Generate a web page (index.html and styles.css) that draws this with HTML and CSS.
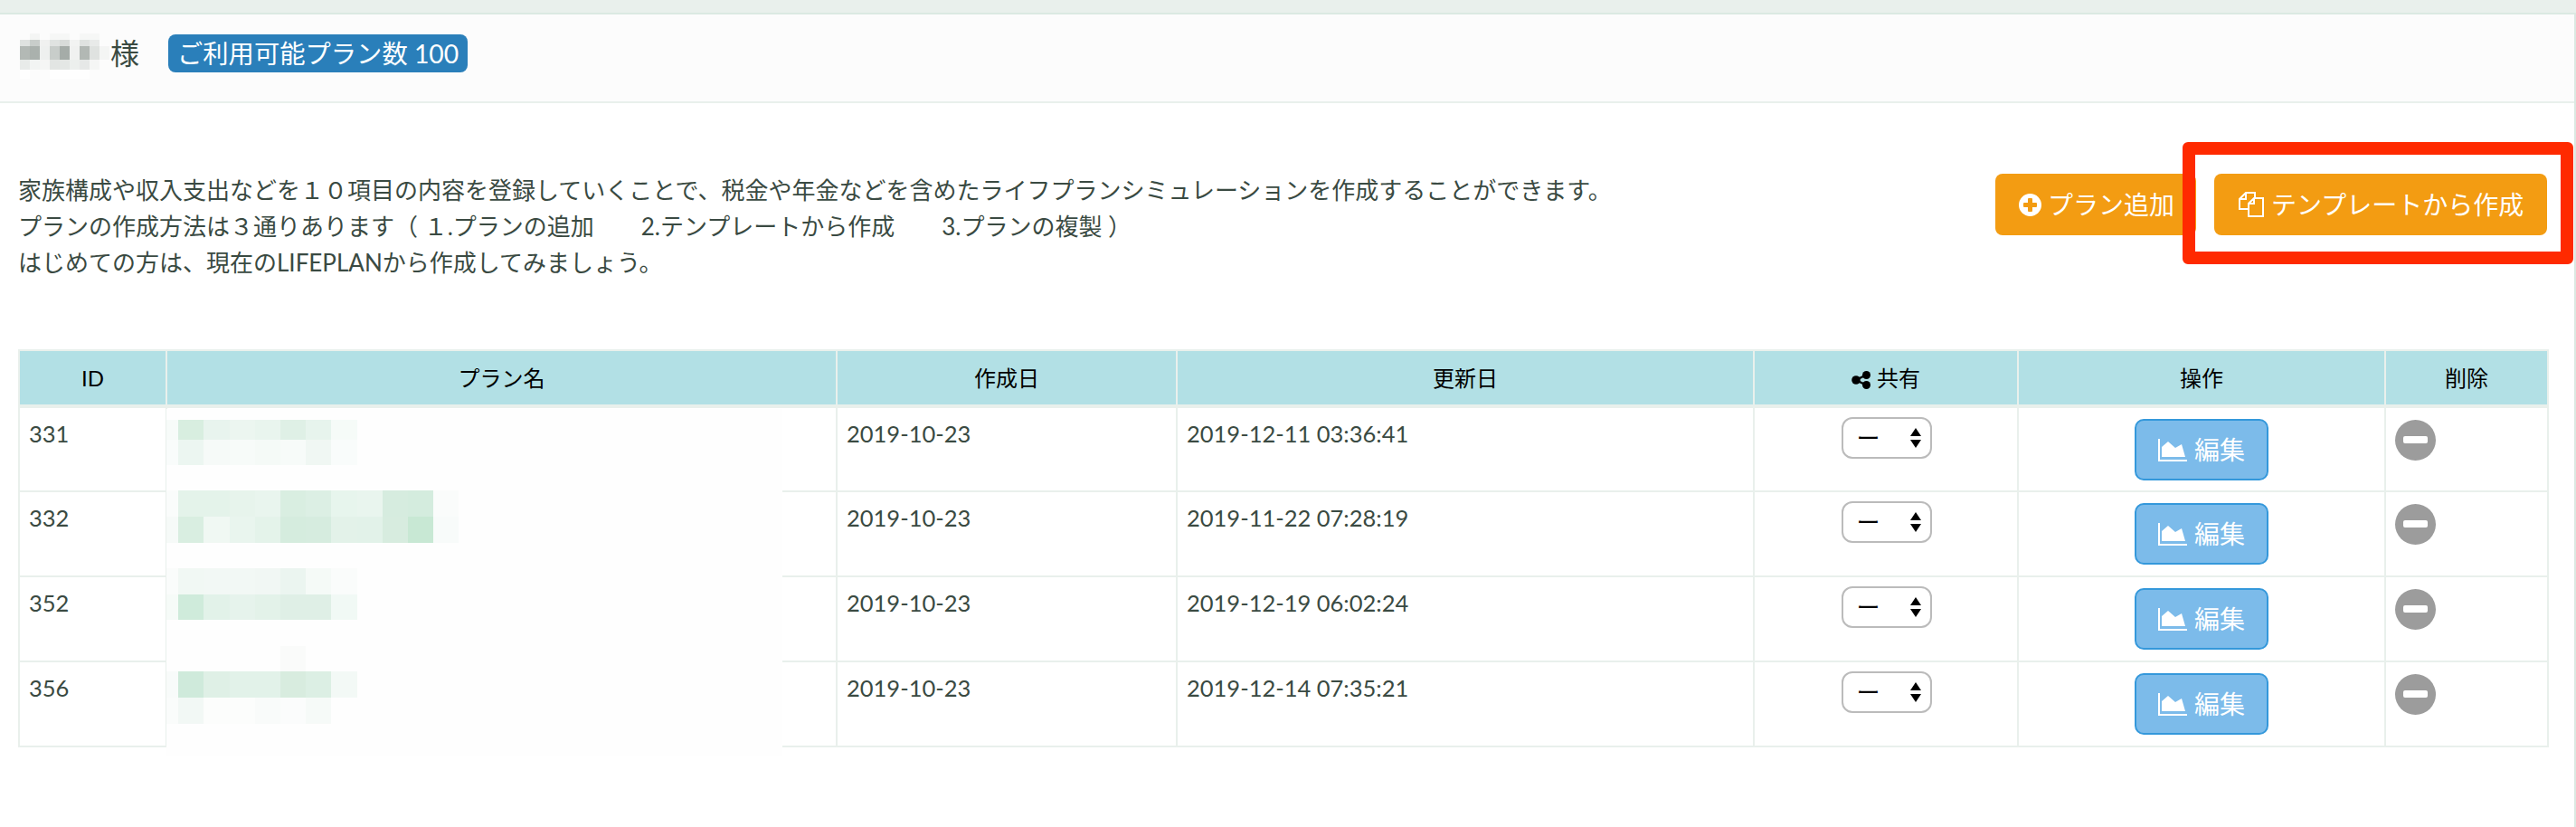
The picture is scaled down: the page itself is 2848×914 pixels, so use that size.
FILE: index.html
```html
<!DOCTYPE html>
<html lang="ja">
<head>
<meta charset="utf-8">
<title>プラン一覧</title>
<link rel="stylesheet" href="styles.css">
</head>
<body>
<div class="topband"></div>
<main class="panel">
  <header class="panel-head">
    <svg class="name-blur" width="100" height="51" viewBox="0 0 100 51">
      <rect x="11" y="0" width="11" height="7" fill="#f4f5f4"/><rect x="33" y="0" width="22" height="7" fill="#f6f7f6"/><rect x="66" y="0" width="22" height="7" fill="#f6f7f6"/>
      <rect x="0" y="7" width="11" height="7" fill="#dfe2e0"/><rect x="11" y="7" width="11" height="7" fill="#c8cdca"/><rect x="22" y="7" width="11" height="7" fill="#f0f1f0"/><rect x="33" y="7" width="11" height="7" fill="#e0e3e1"/><rect x="44" y="7" width="11" height="7" fill="#d8dbd9"/><rect x="55" y="7" width="11" height="7" fill="#f2f3f2"/><rect x="66" y="7" width="11" height="7" fill="#dfe2e0"/><rect x="77" y="7" width="11" height="7" fill="#e8eae9"/>
      <rect x="0" y="14" width="11" height="15" fill="#b3b9b5"/><rect x="11" y="14" width="11" height="15" fill="#aab1ad"/><rect x="22" y="14" width="11" height="15" fill="#eef0ef"/><rect x="33" y="14" width="11" height="15" fill="#c8cdca"/><rect x="44" y="14" width="11" height="15" fill="#a5aca8"/><rect x="55" y="14" width="11" height="15" fill="#f0f1f0"/><rect x="66" y="14" width="11" height="15" fill="#b2b8b4"/><rect x="77" y="14" width="11" height="15" fill="#dfe2e0"/><rect x="88" y="14" width="11" height="15" fill="#f4f5f4"/>
      <rect x="0" y="29" width="11" height="11" fill="#e8ebe9"/><rect x="11" y="29" width="11" height="11" fill="#f2f4f3"/><rect x="22" y="29" width="11" height="11" fill="#f5f6f5"/><rect x="33" y="29" width="11" height="11" fill="#e2e5e3"/><rect x="44" y="29" width="11" height="11" fill="#e4e7e5"/><rect x="55" y="29" width="11" height="11" fill="#ecefed"/><rect x="66" y="29" width="11" height="11" fill="#e6e8e7"/><rect x="77" y="29" width="11" height="11" fill="#f5f6f5"/>
      <rect x="0" y="40" width="11" height="10" fill="#fefefe"/><rect x="33" y="40" width="44" height="10" fill="#fefefe"/>
    </svg>
    <span class="honorific">様</span>
    <span class="badge">ご利用可能プラン数 100</span>
  </header>

  <section class="intro">
    <p class="intro-text">家族構成や収入支出などを１０項目の内容を登録していくことで、税金や年金などを含めたライフプランシミュレーションを作成することができます。<br>プランの作成方法は３通りあります（ １.プランの追加　　2.テンプレートから作成　　3.プランの複製 ）<br>はじめての方は、現在のLIFEPLANから作成してみましょう。</p>
    <div class="actions">
      <a class="btn btn-add">
        <svg class="ico-plus" width="25" height="25" viewBox="0 0 25 25"><circle cx="12.500" cy="12.500" r="12.500" fill="#fff"/><rect x="10" y="5" width="5" height="15" rx="1" fill="#f39c12"/><rect x="5" y="10" width="15" height="5" rx="1" fill="#f39c12"/></svg>
        プラン追加
      </a>
      <a class="btn btn-template">
        <svg class="ico-copy" width="28" height="28" viewBox="0 0 28 28"><path d="M10 19H1V8L8 1H18V7M8 1V8H1M17 7H27V27H11V13ZM17 7V13H11" fill="none" stroke="#fff" stroke-width="2"/></svg>
        テンプレートから作成
      </a>
      <div class="highlight"></div>
    </div>
  </section>

  <div class="table-wrap">
    <table class="plans">
      <colgroup>
        <col class="c-id"><col class="c-name"><col class="c-created"><col class="c-updated"><col class="c-share"><col class="c-op"><col class="c-del">
      </colgroup>
      <thead>
        <tr>
          <th>ID</th><th>プラン名</th><th>作成日</th><th>更新日</th>
          <th><svg class="ico-share" width="22" height="20" viewBox="0 0 22 20"><path d="M16 4.500 5 10 16 15.500" fill="none" stroke="#000" stroke-width="2.500"/><circle cx="5" cy="10" r="4.800"/><circle cx="16.500" cy="4.500" r="4.500"/><circle cx="16.500" cy="15.500" r="4.500"/></svg>共有</th>
          <th>操作</th><th>削除</th>
        </tr>
      </thead>
      <tbody>
        <tr>
          <td>331</td><td></td><td>2019-10-23</td><td>2019-12-11 03:36:41</td>
          <td class="center"><div class="select"><span>ー</span><svg width="12" height="22" viewBox="0 0 12 22"><path d="M6 0 12 9H0ZM0 13H12L6 22Z"/></svg></div></td>
          <td class="center"><a class="btn-edit"><svg width="32" height="25" viewBox="0 0 32 25"><path d="M1 0V24H32" fill="none" stroke="#fff" stroke-width="2"/><path d="M4 20V9L11 3 19 10 26 6 30 20Z" fill="#fff"/></svg>編集</a></td>
          <td><svg class="ico-del" width="45" height="45" viewBox="0 0 45 45"><circle cx="22.500" cy="22.500" r="22.500" fill="#9c9c9c"/><rect x="9" y="18" width="27" height="8" rx="2" fill="#fff"/></svg></td>
        </tr>
        <tr>
          <td>332</td><td></td><td>2019-10-23</td><td>2019-11-22 07:28:19</td>
          <td class="center"><div class="select"><span>ー</span><svg width="12" height="22" viewBox="0 0 12 22"><path d="M6 0 12 9H0ZM0 13H12L6 22Z"/></svg></div></td>
          <td class="center"><a class="btn-edit"><svg width="32" height="25" viewBox="0 0 32 25"><path d="M1 0V24H32" fill="none" stroke="#fff" stroke-width="2"/><path d="M4 20V9L11 3 19 10 26 6 30 20Z" fill="#fff"/></svg>編集</a></td>
          <td><svg class="ico-del" width="45" height="45" viewBox="0 0 45 45"><circle cx="22.500" cy="22.500" r="22.500" fill="#9c9c9c"/><rect x="9" y="18" width="27" height="8" rx="2" fill="#fff"/></svg></td>
        </tr>
        <tr>
          <td>352</td><td></td><td>2019-10-23</td><td>2019-12-19 06:02:24</td>
          <td class="center"><div class="select"><span>ー</span><svg width="12" height="22" viewBox="0 0 12 22"><path d="M6 0 12 9H0ZM0 13H12L6 22Z"/></svg></div></td>
          <td class="center"><a class="btn-edit"><svg width="32" height="25" viewBox="0 0 32 25"><path d="M1 0V24H32" fill="none" stroke="#fff" stroke-width="2"/><path d="M4 20V9L11 3 19 10 26 6 30 20Z" fill="#fff"/></svg>編集</a></td>
          <td><svg class="ico-del" width="45" height="45" viewBox="0 0 45 45"><circle cx="22.500" cy="22.500" r="22.500" fill="#9c9c9c"/><rect x="9" y="18" width="27" height="8" rx="2" fill="#fff"/></svg></td>
        </tr>
        <tr>
          <td>356</td><td></td><td>2019-10-23</td><td>2019-12-14 07:35:21</td>
          <td class="center"><div class="select"><span>ー</span><svg width="12" height="22" viewBox="0 0 12 22"><path d="M6 0 12 9H0ZM0 13H12L6 22Z"/></svg></div></td>
          <td class="center"><a class="btn-edit"><svg width="32" height="25" viewBox="0 0 32 25"><path d="M1 0V24H32" fill="none" stroke="#fff" stroke-width="2"/><path d="M4 20V9L11 3 19 10 26 6 30 20Z" fill="#fff"/></svg>編集</a></td>
          <td><svg class="ico-del" width="45" height="45" viewBox="0 0 45 45"><circle cx="22.500" cy="22.500" r="22.500" fill="#9c9c9c"/><rect x="9" y="18" width="27" height="8" rx="2" fill="#fff"/></svg></td>
        </tr>
      </tbody>
    </table>
    <svg class="mosaic" width="681" height="384" viewBox="0 2 681 384">
      <rect y="0" width="681" height="388" fill="#fefefe"/>
      <g>
        <rect x="0" y="14" width="13" height="22" fill="#f7fbf9"/><rect x="13" y="14" width="28" height="22" fill="#d8eee0"/><rect x="41" y="14" width="29" height="22" fill="#e8f4ee"/><rect x="70" y="14" width="28" height="22" fill="#ecf6f0"/><rect x="98" y="14" width="28" height="22" fill="#e9f5ee"/><rect x="126" y="14" width="28" height="22" fill="#dff0e6"/><rect x="154" y="14" width="28" height="22" fill="#e7f4ed"/><rect x="182" y="14" width="29" height="22" fill="#f6fbf8"/>
        <rect x="0" y="36" width="13" height="28" fill="#f9fcfb"/><rect x="13" y="36" width="28" height="28" fill="#ecf6f1"/><rect x="41" y="36" width="29" height="28" fill="#f6faf8"/><rect x="70" y="36" width="28" height="28" fill="#f7fbf9"/><rect x="98" y="36" width="28" height="28" fill="#f5faf7"/><rect x="126" y="36" width="28" height="28" fill="#f7fbf9"/><rect x="154" y="36" width="28" height="28" fill="#f0f7f3"/><rect x="182" y="36" width="29" height="28" fill="#f9fcfb"/>
      </g>
      <g>
        <rect x="0" y="92" width="13" height="29" fill="#fafcfb"/><rect x="13" y="92" width="28" height="29" fill="#e4f3ea"/><rect x="41" y="92" width="29" height="29" fill="#e4f3ea"/><rect x="70" y="92" width="28" height="29" fill="#e7f4ec"/><rect x="98" y="92" width="28" height="29" fill="#e9f5ee"/><rect x="126" y="92" width="28" height="29" fill="#d9eee1"/><rect x="154" y="92" width="28" height="29" fill="#dcefe4"/><rect x="182" y="92" width="29" height="29" fill="#e7f5ed"/><rect x="211" y="92" width="28" height="29" fill="#e9f5ee"/><rect x="239" y="92" width="28" height="29" fill="#d6ecdf"/><rect x="267" y="92" width="28" height="29" fill="#d4ecde"/><rect x="295" y="92" width="28" height="29" fill="#fafcfb"/>
        <rect x="0" y="121" width="13" height="29" fill="#f6faf8"/><rect x="13" y="121" width="28" height="29" fill="#d9eee1"/><rect x="41" y="121" width="29" height="29" fill="#f0f8f3"/><rect x="70" y="121" width="28" height="29" fill="#e9f5ee"/><rect x="98" y="121" width="28" height="29" fill="#e4f3ea"/><rect x="126" y="121" width="28" height="29" fill="#d5ecde"/><rect x="154" y="121" width="28" height="29" fill="#d6ecdf"/><rect x="182" y="121" width="29" height="29" fill="#e3f2e9"/><rect x="211" y="121" width="28" height="29" fill="#e2f2e9"/><rect x="239" y="121" width="28" height="29" fill="#d7ecdf"/><rect x="267" y="121" width="28" height="29" fill="#c8e8d4"/><rect x="295" y="121" width="28" height="29" fill="#f8fbfa"/>
      </g>
      <g>
        <rect x="0" y="178" width="13" height="29" fill="#fafcfb"/><rect x="13" y="178" width="28" height="29" fill="#f1f8f4"/><rect x="41" y="178" width="29" height="29" fill="#f2f8f5"/><rect x="70" y="178" width="28" height="29" fill="#f2f8f5"/><rect x="98" y="178" width="28" height="29" fill="#f1f7f4"/><rect x="126" y="178" width="28" height="29" fill="#ebf5f0"/><rect x="154" y="178" width="28" height="29" fill="#f5faf7"/><rect x="182" y="178" width="29" height="29" fill="#fafcfb"/>
        <rect x="0" y="207" width="13" height="28" fill="#f6fbf8"/><rect x="13" y="207" width="28" height="28" fill="#cfebdb"/><rect x="41" y="207" width="29" height="28" fill="#e2f2e9"/><rect x="70" y="207" width="28" height="28" fill="#e6f3ec"/><rect x="98" y="207" width="28" height="28" fill="#e3f2e9"/><rect x="126" y="207" width="28" height="28" fill="#dfefe6"/><rect x="154" y="207" width="28" height="28" fill="#dfefe6"/><rect x="182" y="207" width="29" height="28" fill="#f1f9f5"/>
      </g>
      <g>
        <rect x="126" y="264" width="28" height="28" fill="#fafbfa"/>
        <rect x="0" y="292" width="13" height="29" fill="#f8fbfa"/><rect x="13" y="292" width="28" height="29" fill="#cfeadb"/><rect x="41" y="292" width="29" height="29" fill="#dff0e6"/><rect x="70" y="292" width="28" height="29" fill="#e2f2e9"/><rect x="98" y="292" width="28" height="29" fill="#e2f2e9"/><rect x="126" y="292" width="28" height="29" fill="#d8ecdf"/><rect x="154" y="292" width="28" height="29" fill="#dcefe4"/><rect x="182" y="292" width="29" height="29" fill="#f3f9f6"/>
        <rect x="0" y="321" width="13" height="29" fill="#fafcfb"/><rect x="13" y="321" width="28" height="29" fill="#f2f8f5"/><rect x="41" y="321" width="29" height="29" fill="#fcfdfc"/><rect x="70" y="321" width="28" height="29" fill="#fcfdfc"/><rect x="98" y="321" width="28" height="29" fill="#f9fbfa"/><rect x="126" y="321" width="28" height="29" fill="#fbfcfc"/><rect x="154" y="321" width="28" height="29" fill="#f6faf8"/>
      </g>
    </svg>
  </div>
</main>
</body>
</html>
```

FILE: styles.css
```css
* { box-sizing: border-box; }

html, body { height: 100%; }

body {
  margin: 0;
  display: flex;
  flex-direction: column;
  background: #e9f0ec;
  font-family: "Lato", "Noto Sans CJK JP", sans-serif;
  font-size: 26px;
  line-height: 40px;
  color: #3a4a42;
  overflow: hidden;
}

.topband { height: 14px; flex: none; }

.panel {
  flex: 1;
  background: #fff;
  border-top: 2px solid #dbe9e2;
  border-right: 2px solid #dbe9e2;
}

.panel-head {
  height: 98px;
  display: flex;
  align-items: flex-start;
  padding: 21px 0 0 22px;
  background: #fcfcfc;
  border-bottom: 2px solid #e9f0ec;
}

.name-blur { flex: none; }

.honorific { font-size: 32px; line-height: 42px; margin-top: 1px; }

.badge {
  margin-left: 32px;
  margin-top: 1px;
  height: 42px;
  padding: 0 10px;
  display: flex;
  align-items: center;
  background: #2a7fba;
  border-radius: 8px;
  color: #fff;
  font-size: 28.300px;
}

.intro {
  display: flex;
  justify-content: space-between;
  align-items: flex-start;
  height: 272px;
  padding: 76px 30px 0 20px;
}

.intro-text { margin: 0; }

.actions {
  position: relative;
  display: flex;
  gap: 20px;
  margin-top: 2px;
}

.btn {
  height: 68px;
  display: flex;
  align-items: center;
  background: #f39c12;
  border-radius: 8px;
  color: #fff;
  font-size: 28px;
  white-space: nowrap;
}

.btn-add { width: 222px; padding-left: 26px; }
.btn-template { width: 368px; padding-left: 27px; }

.ico-plus { margin-right: 7px; flex: none; }
.ico-copy { margin-right: 8px; flex: none; }

.highlight {
  position: absolute;
  left: 207px;
  top: -35px;
  width: 432px;
  height: 135px;
  border: 14px solid #ff2a00;
  border-radius: 6px;
}

.table-wrap {
  position: relative;
  margin-left: 20px;
  width: 2796px;
}

.plans {
  width: 2796px;
  table-layout: fixed;
  border-collapse: collapse;
}

.c-id { width: 163px; }
.c-name { width: 741px; }
.c-created { width: 376px; }
.c-updated { width: 638px; }
.c-share { width: 292px; }
.c-op { width: 406px; }
.c-del { width: 180px; }

.plans th, .plans td { border: 2px solid #e9f0ec; }

.plans th {
  height: 62px;
  padding: 0;
  background: #b2e0e5;
  color: #000;
  font-size: 24px;
  font-weight: 400;
  text-align: center;
  vertical-align: middle;
  border-bottom-width: 4px;
}

.plans td {
  height: 94px;
  padding: 8px 10px;
  font-size: 25.500px;
  vertical-align: top;
}

.plans td.center { text-align: center; }

.ico-share { margin-right: 6px; vertical-align: -3px; }

.select {
  display: inline-flex;
  align-items: center;
  justify-content: space-between;
  width: 100px;
  height: 46px;
  margin: 2px 0 0 1px;
  padding: 0 10px 0 15px;
  border: 2px solid #bbb;
  border-radius: 12px;
  background: #fff;
  color: #000;
  font-size: 26px;
  vertical-align: top;
}

.btn-edit {
  display: inline-flex;
  align-items: center;
  justify-content: center;
  gap: 8px;
  width: 148px;
  height: 68px;
  margin-top: 4px;
  background: #7cbbea;
  border: 2px solid #3498db;
  border-radius: 10px;
  color: #fff;
  font-size: 28px;
  vertical-align: top;
}

.ico-del { display: block; margin: 5px 0 0 0; }

.mosaic {
  position: absolute;
  left: 164px;
  top: 66px;
}
```
